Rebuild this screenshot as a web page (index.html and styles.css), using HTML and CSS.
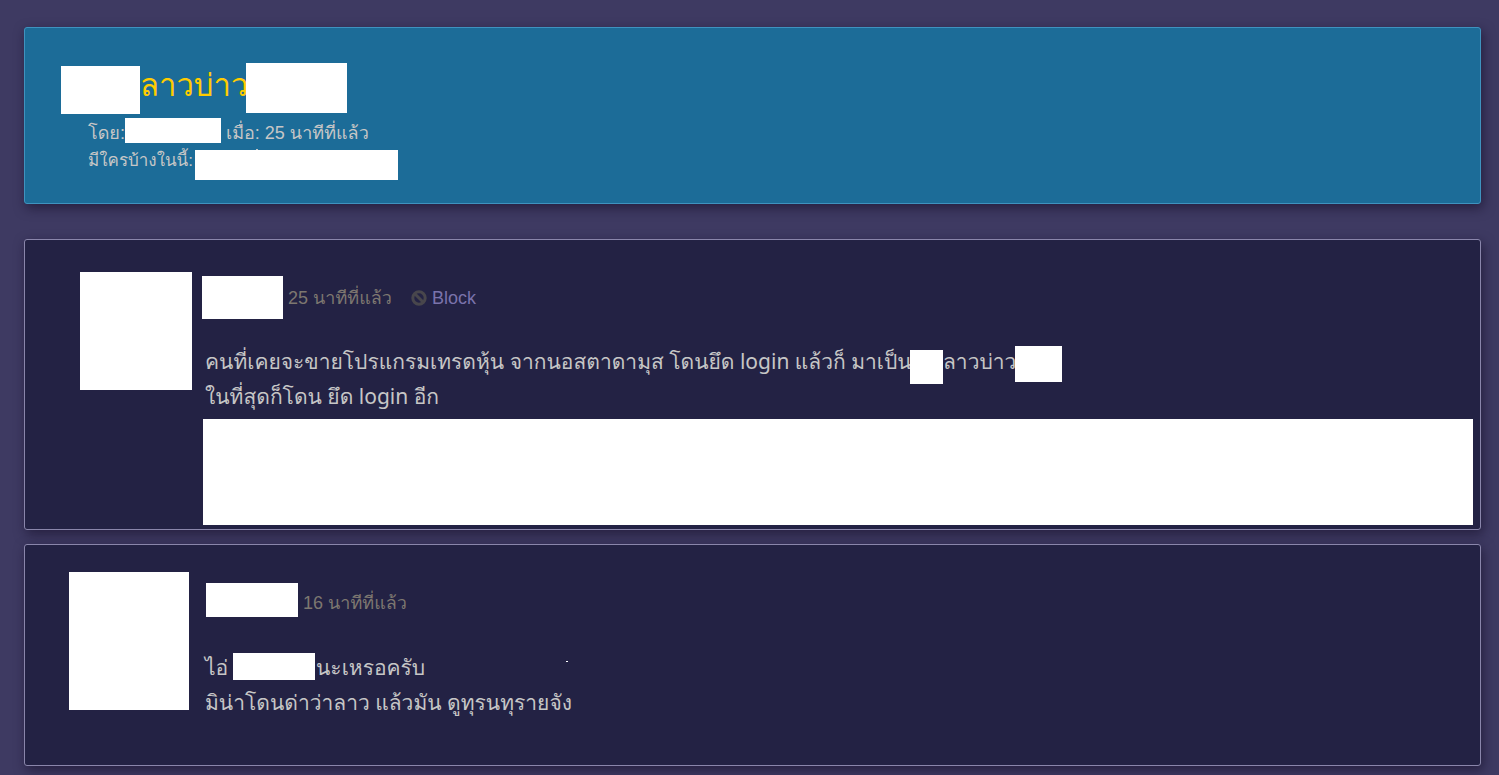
FILE: index.html
```html
<!DOCTYPE html>
<html lang="th">
<head>
<meta charset="utf-8">
<title>ลาวบ่าว</title>
<link rel="stylesheet" href="styles.css">
</head>
<body>
<main class="thread">
  <header class="card topic">
    <h1 class="topic-title"><span class="mask mask-title-start"></span><span class="title-text">ลาวบ่าว</span><span class="mask mask-title-end"></span></h1>
    <div class="topic-meta">
      <p class="meta-row"><span class="by">โดย:</span><span class="mask mask-author"></span><span class="when">เมื่อ: 25 นาทีที่แล้ว</span></p>
      <p class="meta-row meta-people"><span class="people">มีใครบ้างในนี้:</span><span class="mask mask-people"></span></p>
    </div>
  </header>

  <article class="card post post-first">
    <div class="mask avatar avatar-first"></div>
    <div class="post-body">
      <div class="post-head">
        <span class="mask mask-name-first"></span>
        <time class="time">25 นาทีที่แล้ว</time>
        <a class="block" href="#"><svg class="ban" viewBox="0 0 16 16" aria-hidden="true"><circle cx="8" cy="8" r="6.2"/><path d="M4 4l8 8"/></svg>Block</a>
      </div>
      <div class="post-text">
        <p class="line"><span class="lead">คนที่เคยจะขายโปรแกรมเทรดหุ้น จากนอสตาดามุส โดนยึด login แล้วก็ มาเป็น</span><span class="mask mask-word"></span><span class="nick">ลาวบ่าว</span><span class="mask mask-word-end"></span></p>
        <p class="line">ในที่สุดก็โดน ยึด login อีก</p>
      </div>
      <div class="mask attachment"></div>
    </div>
  </article>

  <article class="card post post-second">
    <div class="mask avatar avatar-second"></div>
    <div class="post-body">
      <div class="post-head">
        <span class="mask mask-name-second"></span>
        <time class="time">16 นาทีที่แล้ว</time>
      </div>
      <div class="post-text">
        <p class="line"><span class="prefix">ไอ่</span><span class="mask mask-target"></span><span class="reply">นะเหรอครับ</span><span class="mask speck"></span></p>
        <p class="line">มิน่าโดนด่าว่าลาว แล้วมัน ดูทุรนทุรายจัง</p>
      </div>
    </div>
  </article>
</main>
</body>
</html>
```
FILE: styles.css
```css
* { box-sizing: border-box; }

body {
  margin: 0;
  background: #3e3a62;
  color: #c6c6c6;
  font-family: "Liberation Sans", Tahoma, Loma, "Noto Sans Thai Looped", "Noto Sans Thai", sans-serif;
  font-size: 18px;
}

h1, p { margin: 0; font-weight: normal; }

.thread { padding: 27px 18px 9px 24px; }

.card {
  border: 1px solid #8a86ab;
  border-radius: 3px;
  background: #232244;
  box-shadow: 2px 4px 12px rgba(20, 14, 40, 0.6);
}

.mask { flex: none; background: #fff; }

.topic {
  margin-bottom: 35px;
  padding: 35px 36px 23px;
  border-color: #3f93bf;
  background: #1c6c98;
}

.topic-title {
  display: flex;
  height: 51px;
  margin-bottom: 4px;
  color: #fc0;
  font-size: 31px;
  line-height: 46px;
  white-space: nowrap;
}
.title-text { width: 106px; }
.mask-title-start { align-self: flex-end; width: 79px; height: 48px; }
.mask-title-end { width: 101px; height: 50px; }

.topic-meta { padding-left: 27px; }
.meta-row { display: flex; height: 28px; line-height: 30px; white-space: nowrap; }
.meta-people { height: 34px; font-size: 17px; }
.by { width: 37px; }
.when { margin-left: 5px; }
.people { width: 107px; }
.mask-author { width: 96px; height: 25px; }
.mask-people { position: relative; align-self: flex-end; width: 203px; height: 30px; }
.mask-people::before {
  content: "";
  position: absolute;
  top: -1px;
  left: 61px;
  width: 2px;
  height: 1px;
  background: #c6c6c6;
}

.post { display: flex; align-items: flex-start; }
.post-first { margin-bottom: 14px; padding: 32px 7px 4px 55px; }
.post-second { padding: 27px 7px 45px 44px; }
.avatar-first { width: 112px; height: 118px; margin-right: 10px; }
.avatar-second { width: 120px; height: 138px; margin-right: 16px; }
.post-body { flex: 1; min-width: 0; }

.post-head { display: flex; align-items: center; gap: 5px; color: #7d7770; line-height: 24px; }
.post-first .post-head { padding-top: 4px; }
.post-second .post-head { padding: 11px 0 0 1px; }
.post-second .time { padding-top: 6px; }
.mask-name-first { width: 81px; height: 43px; }
.mask-name-second { width: 92px; height: 34px; }
.block {
  display: flex;
  align-items: center;
  gap: 5px;
  margin-left: 14px;
  color: #7a73ab;
  text-decoration: none;
}
.ban { width: 16px; height: 16px; fill: none; stroke: #48464c; stroke-width: 3; }

.post-text {
  font-family: "Noto Sans", Loma, "Noto Sans Thai Looped", "Noto Sans Thai", sans-serif;
  font-size: 21px;
  line-height: 35px;
  white-space: nowrap;
}
.post-first .post-text { padding: 25px 0 5px 3px; }
.post-second .post-text { padding-top: 33px; }
.line { display: flex; height: 35px; }
.lead { width: 705px; }
.nick { width: 72px; }
.mask-word { width: 33px; height: 34px; margin-top: 6px; }
.mask-word-end { width: 47px; height: 36px; margin-top: 2px; }
.attachment { height: 106px; margin-left: 1px; }
.prefix { width: 28px; }
.mask-target { width: 82px; height: 27px; margin-top: 3px; }
.reply { width: 251px; padding-left: 1px; }
.speck { width: 2px; height: 1px; margin-top: 11px; }
```
